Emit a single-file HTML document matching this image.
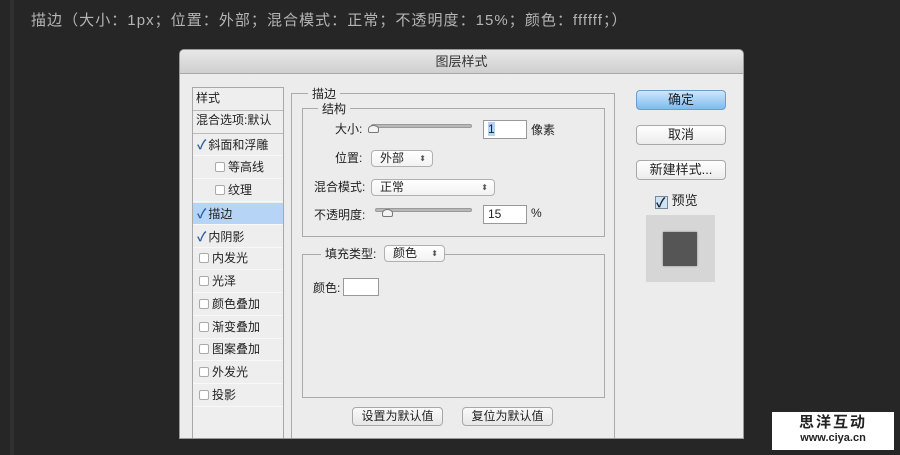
<!DOCTYPE html>
<html><head><meta charset="utf-8">
<style>
*{box-sizing:border-box;margin:0;padding:0}
body{width:900px;height:455px;background:#262626;position:relative;overflow:hidden;font-family:"Liberation Sans","Noto Sans CJK SC",sans-serif;font-size:12px;color:#222}
.a{position:absolute}
.strip{left:10px;top:0;width:4px;height:455px;background:#303030}
.top{left:31px;top:9px;color:#b4b4b4;font-size:15px;white-space:nowrap;letter-spacing:1.05px}
.dlg{left:179px;top:49px;width:565px;height:390px;background:#ececec;border-radius:5px 5px 0 0;overflow:hidden;border:1px solid #9a9a9a}
.title{left:0;top:0;width:100%;height:24px;background:linear-gradient(#e8e8e8,#cfcfcf);border-bottom:1px solid #a8a8a8;text-align:center;line-height:24px;font-size:13px;color:#333}
.lp{left:12px;top:37px;width:92px;height:360px;background:#eeeeee;border:1px solid #a8a8a8}
.row{position:absolute;left:0;width:90px;height:22px;border-bottom:1px solid #f8f8f8;line-height:21px;font-size:12px;white-space:nowrap}
.cb{display:inline-block;width:10px;height:10px;border:1px solid #aaa;border-radius:2px;background:#fff;vertical-align:-1px;margin-right:3px}
.ck{color:#2b5fa8;font-size:13px;font-weight:bold;margin-right:2px}
.fs{border:1px solid #aaa}
.lbl{background:#ececec;padding:0 4px;font-size:12px}
.pop{border:1px solid #b0b0b0;border-radius:4px;background:linear-gradient(#fff,#f2f2f2);height:17px;line-height:15px;padding-left:8px;font-size:12px}
.pop:after{content:"⬍";position:absolute;right:6px;top:0;font-size:8px;color:#555}
.inp{background:#fff;border:1px solid #999;height:19px;line-height:17px;padding-left:4px;font-size:12px}
.trk{height:4px;background:#b8b8b8;border-radius:2px;border:1px solid #9a9a9a}
.th{width:11px;height:8px;border:1px solid #777;background:#f4f4f4;border-radius:50% 50% 2px 2px}
.btn{border:1px solid #a8a8a8;border-radius:4px;background:linear-gradient(#fff,#ececec);text-align:center;font-size:13px;height:20px;line-height:18px}
.sbtn{border:1px solid #a8a8a8;border-radius:4px;background:linear-gradient(#fafafa,#e6e6e6);text-align:center;font-size:12px;height:19px;line-height:17px;width:91px}
</style></head><body>
<div class="a strip"></div>
<div class="a top">描边（大小：1px；位置：外部；混合模式：正常；不透明度：15%；颜色：ffffff；）</div>

<div class="a dlg">
 <div class="a title">图层样式</div>
 <div class="a lp">
  <div class="row" style="top:0;height:23px;border-bottom:1px solid #bbb;padding-left:3px">样式</div>
  <div class="row" style="top:22px;height:24px;border-bottom:1px solid #bbb;padding-left:3px">混合选项:默认</div>
  <div class="row" style="top:46px;padding-left:4px"><span class="ck">✓</span>斜面和浮雕</div>
  <div class="row" style="top:69px;padding-left:22px"><span class="cb"></span>等高线</div>
  <div class="row" style="top:92px;padding-left:22px"><span class="cb"></span>纹理</div>
  <div class="row" style="top:115px;padding-left:4px;background:#b6d4f5"><span class="ck">✓</span>描边</div>
  <div class="row" style="top:138px;padding-left:4px"><span class="ck">✓</span>内阴影</div>
  <div class="row" style="top:160px;padding-left:6px"><span class="cb"></span>内发光</div>
  <div class="row" style="top:183px;padding-left:6px"><span class="cb"></span>光泽</div>
  <div class="row" style="top:206px;padding-left:6px"><span class="cb"></span>颜色叠加</div>
  <div class="row" style="top:229px;padding-left:6px"><span class="cb"></span>渐变叠加</div>
  <div class="row" style="top:251px;padding-left:6px"><span class="cb"></span>图案叠加</div>
  <div class="row" style="top:274px;padding-left:6px"><span class="cb"></span>外发光</div>
  <div class="row" style="top:297px;padding-left:6px"><span class="cb"></span>投影</div>
 </div>
 <div class="a fs" style="left:111px;top:43px;width:324px;height:360px;border-bottom:none;border-right-color:#aaa"></div>
 <div class="a lbl" style="left:128px;top:35px">描边</div>
 <div class="a fs" style="left:122px;top:58px;width:303px;height:129px"></div>
 <div class="a lbl" style="left:138px;top:50px">结构</div>

 <div class="a" style="left:155px;top:70px">大小:</div>
 <div class="a trk" style="left:191px;top:74px;width:101px"></div>
 <div class="a th" style="left:188px;top:75px"></div>
 <div class="a inp" style="left:303px;top:70px;width:44px"><span style="background:#b6d4f5">1</span></div>
 <div class="a" style="left:351px;top:71px">像素</div>

 <div class="a" style="left:155px;top:99px">位置:</div>
 <div class="a pop" style="left:191px;top:100px;width:62px">外部</div>

 <div class="a" style="left:134px;top:128px">混合模式:</div>
 <div class="a pop" style="left:191px;top:129px;width:124px">正常</div>

 <div class="a" style="left:134px;top:156px">不透明度:</div>
 <div class="a trk" style="left:195px;top:158px;width:97px"></div>
 <div class="a th" style="left:202px;top:159px"></div>
 <div class="a inp" style="left:303px;top:155px;width:44px">15</div>
 <div class="a" style="left:351px;top:156px">%</div>

 <div class="a fs" style="left:122px;top:204px;width:303px;height:144px"></div>
 <div class="a lbl" style="left:141px;top:195px;background:#ececec;width:65px">填充类型:</div>
 <div class="a pop" style="left:204px;top:195px;width:61px">颜色</div>
 <div class="a" style="left:133px;top:229px">颜色:</div>
 <div class="a" style="left:163px;top:228px;width:36px;height:18px;background:#fff;border:1px solid #999"></div>

 <div class="a sbtn" style="left:172px;top:357px">设置为默认值</div>
 <div class="a sbtn" style="left:282px;top:357px">复位为默认值</div>

 <div class="a btn" style="left:456px;top:40px;width:90px;background:linear-gradient(#cfe6fb,#7dbbf0);border-color:#6d9ccf">确定</div>
 <div class="a btn" style="left:456px;top:75px;width:90px">取消</div>
 <div class="a btn" style="left:456px;top:110px;width:90px">新建样式...</div>
 <div class="a" style="left:475px;top:140px;font-size:13px"><span style="display:inline-block;width:13px;height:13px;background:#cfe3f7;border:1px solid #789;color:#123;font-size:13px;line-height:11px;font-weight:bold;vertical-align:-2px">✓</span> 预览</div>
 <div class="a" style="left:466px;top:165px;width:69px;height:67px;background:#d6d6d6"></div>
 <div class="a" style="left:483px;top:182px;width:34px;height:34px;background:#555;box-shadow:0 0 2px #888"></div>
</div>

<div class="a" style="left:772px;top:412px;width:122px;height:38px;background:#fff;text-align:center">
 <div style="font-size:15px;font-weight:bold;letter-spacing:2px;line-height:18px;margin-top:2px;color:#222">思洋互动</div>
 <div style="font-size:11px;font-weight:bold;line-height:13px;color:#222">www.ciya.cn</div>
</div>
</body></html>
